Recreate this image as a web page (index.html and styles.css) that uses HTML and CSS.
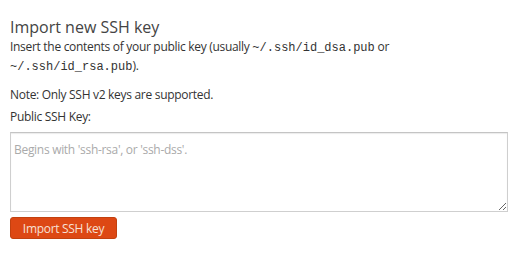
FILE: index.html
```html
<!DOCTYPE html>
<html>
<head>
<meta charset="utf-8">
<link rel="stylesheet" href="styles.css">
</head>
<body>
<div class="panel">
  <h2 class="title">Import new SSH key</h2>
  <p class="intro">Insert the contents of your public key (usually <code>~/.ssh/id_dsa.pub</code> or <code>~/.ssh/id_rsa.pub</code>).</p>
  <p class="note">Note: Only SSH v2 keys are supported.</p>
  <label class="label" for="key">Public SSH Key:</label>
  <textarea id="key" class="keyarea" placeholder="Begins with 'ssh-rsa', or 'ssh-dss'."></textarea>
  <div class="actions"><button class="btn" type="button">Import SSH key</button></div>
</div>
</body>
</html>
```
FILE: styles.css
```css
html, body {
  margin: 0;
  padding: 0;
  background: #fff;
}
.panel {
  padding: 16px 12px 0 10px;
  font-family: "Open Sans", sans-serif;
  color: #333;
  font-size: 12px;
  letter-spacing: -0.3px;
}
.title {
  margin: 0;
  font-weight: normal;
  font-size: 16px;
  line-height: 22px;
  color: #444;
  letter-spacing: 0;
}
.intro {
  margin: 0;
  line-height: 18px;
  width: 400px;
}
code {
  font-family: "Liberation Mono", monospace;
  font-size: 12px;
  letter-spacing: 0;
}
.note {
  margin: 10px 0 0;
  line-height: 18px;
}
.label {
  display: block;
  margin-top: 4px;
  line-height: 18px;
}
.keyarea {
  display: block;
  box-sizing: border-box;
  width: 498px;
  height: 80px;
  margin-top: 6px;
  border: 1px solid #cfcfcf;
  border-top-color: #c4c4c4;
  box-shadow: inset 0 1px 1px rgba(0,0,0,0.08);
  padding: 8px 3px;
  font-family: "Open Sans", sans-serif;
  font-size: 12px;
  letter-spacing: -0.3px;
  resize: vertical;
}
.keyarea::placeholder {
  color: #aaa;
}
.actions {
  margin-top: 5px;
}
.btn {
  width: 107px;
  height: 22px;
  border: 1px solid #c2410f;
  border-radius: 3px;
  background: #dd4814;
  color: #f7e0d4;
  font-family: "Open Sans", sans-serif;
  font-size: 12px;
  letter-spacing: -0.3px;
  padding: 0;
}
```
